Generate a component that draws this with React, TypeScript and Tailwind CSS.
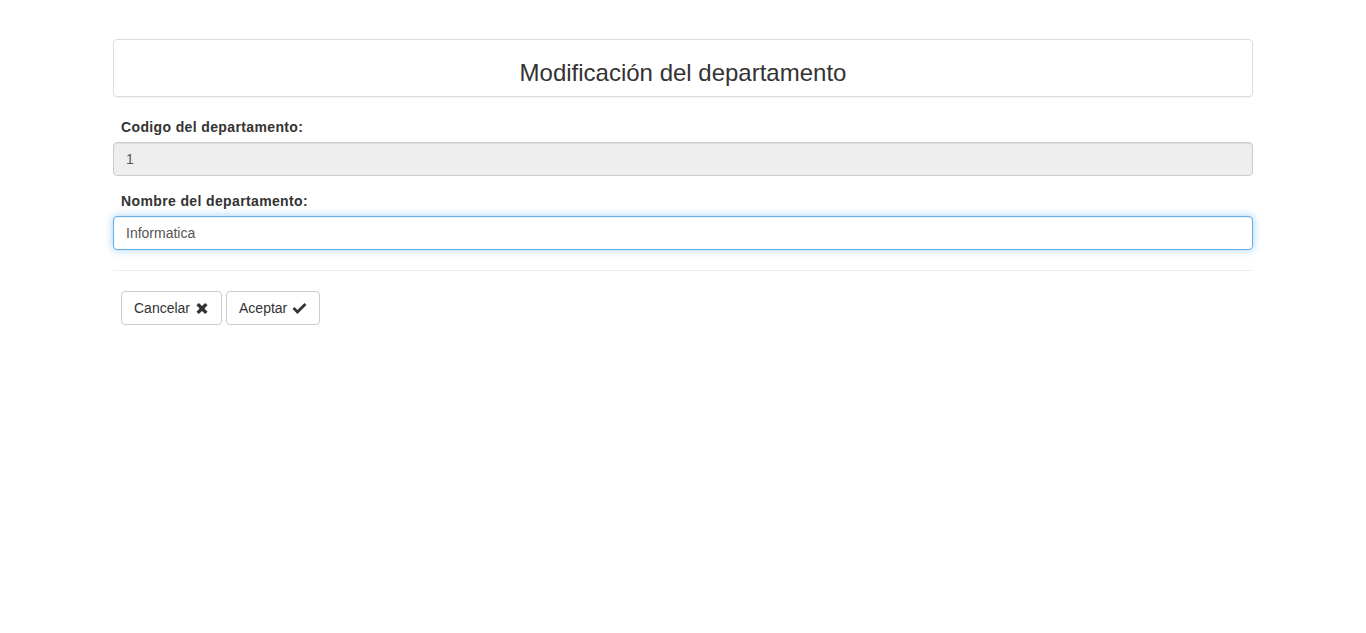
import { useState } from 'react';

// Glyphicon-style bold X
function RemoveIcon() {
  return (
    <svg viewBox="0 0 14 14" className="w-[14px] h-[13px] inline-block" fill="#333">
      <path d="M1 3.6 3.6 1 7 4.4 10.4 1 13 3.6 9.6 7 13 10.4 10.4 13 7 9.6 3.6 13 1 10.4 4.4 7Z" />
    </svg>
  );
}

// Glyphicon-style check mark
function OkIcon() {
  return (
    <svg viewBox="0 0 16 14" className="w-[15px] h-[13px] inline-block" fill="#333">
      <path d="M0.5 7.6 2.6 5.5 5.8 8.7 13.4 1.1 15.5 3.2 5.8 12.9Z" />
    </svg>
  );
}

export default function App() {
  const [nombre, setNombre] = useState('Informatica');

  return (
    <div className="min-h-[633px] bg-white font-['Liberation_Sans',Arial,sans-serif] text-[14px] text-[#333]">
      <div className="w-[1140px] mx-auto pt-[39px]">
        {/* Header panel */}
        <div className="border border-[#ddd] rounded-[4px] shadow-[0_1px_1px_rgba(0,0,0,0.05)] pt-5 pb-[10px] text-center">
          <h3 className="text-[24px] leading-[26px] text-[#333]">Modificación del departamento</h3>
        </div>

        {/* Form */}
        <form className="pt-5" onSubmit={(e) => e.preventDefault()}>
          <div className="mb-[15px]">
            <label className="block font-bold leading-5 mb-[5px] pl-2 tracking-[0.37px]">Codigo del departamento:</label>
            <input
              disabled
              value="1"
              className="block w-full h-[34px] px-3 border border-[#ccc] rounded-[4px] bg-[#eee] text-[#555] shadow-[inset_0_1px_1px_rgba(0,0,0,0.075)] outline-none"
            />
          </div>
          <div>
            <label className="block font-bold leading-5 mb-[5px] pl-2 tracking-[0.37px]">Nombre del departamento:</label>
            <input
              autoFocus
              value={nombre}
              onChange={(e) => setNombre(e.target.value)}
              className="block w-full h-[34px] px-3 border border-[#66afe9] rounded-[4px] bg-white text-[#555] caret-[#333] shadow-[inset_0_1px_1px_rgba(0,0,0,0.075),0_0_8px_rgba(102,175,233,0.6)] outline-none"
            />
          </div>

          <hr className="mt-5 mb-5 border-0 border-t border-[#eee]" />

          <div className="flex gap-1 pl-2">
            <button
              type="button"
              className="h-[34px] px-3 border border-[#ccc] rounded-[4px] bg-white text-[#333] flex items-center gap-[5px]"
            >
              Cancelar <RemoveIcon />
            </button>
            <button
              type="submit"
              className="h-[34px] px-3 border border-[#ccc] rounded-[4px] bg-white text-[#333] flex items-center gap-[5px]"
            >
              Aceptar <OkIcon />
            </button>
          </div>
        </form>
      </div>
    </div>
  );
}
